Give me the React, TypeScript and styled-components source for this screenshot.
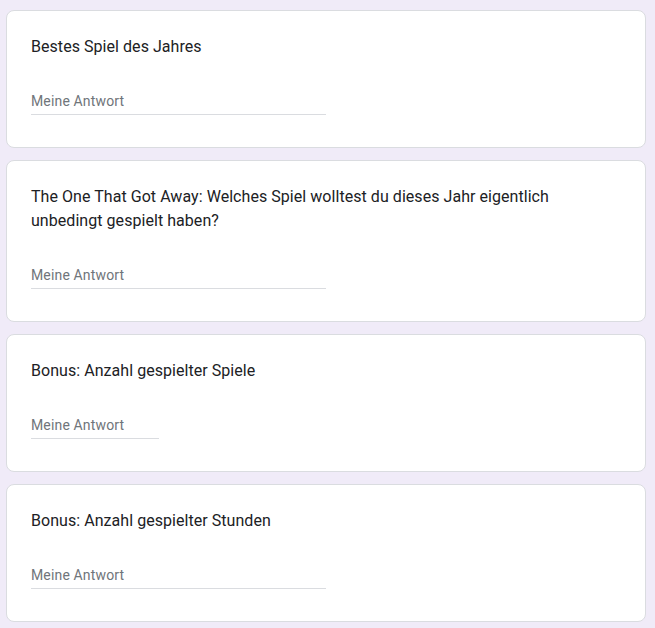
import React from 'react';
import styled, { createGlobalStyle } from 'styled-components';

const GlobalStyle = createGlobalStyle`
  html, body {
    margin: 0;
    padding: 0;
    background: #f0ebf8;
  }
`;

const Page = styled.div`
  display: flex;
  flex-direction: column;
  gap: 12px;
  padding: 10px 9px 10px 6px;
  background: #f0ebf8;
  min-height: 628px;
  box-sizing: border-box;
`;

const Card = styled.div`
  background: #fff;
  border: 1px solid #dadce0;
  border-radius: 8px;
  padding: 24px;
`;

const Title = styled.div`
  font-family: Roboto, 'Noto Sans', sans-serif;
  font-size: 16px;
  line-height: 24px;
  color: #202124;
  letter-spacing: 0.05px;
`;

const AnswerWrap = styled.div`
  padding: 31px 0 8px;
`;

const Answer = styled.input<{ $short?: boolean }>`
  display: block;
  box-sizing: content-box;
  width: ${(p) => (p.$short ? '128px' : '295px')};
  height: 22px;
  margin: 0;
  padding: 0 0 2px;
  border: none;
  border-bottom: 1px solid #dadce0;
  outline: none;
  background: transparent;
  font-family: Roboto, 'Noto Sans', sans-serif;
  font-size: 14px;
  line-height: 22px;
  letter-spacing: 0.15px;
  color: #202124;

  &::placeholder {
    color: #70757a;
  }
`;

const questions = [
  { title: 'Bestes Spiel des Jahres' },
  {
    title:
      'The One That Got Away: Welches Spiel wolltest du dieses Jahr eigentlich unbedingt gespielt haben?',
  },
  { title: 'Bonus: Anzahl gespielter Spiele', short: true },
  { title: 'Bonus: Anzahl gespielter Stunden' },
];

const App = () => {
  return (
    <>
      <GlobalStyle />
      <Page>
        {questions.map((q) => (
          <Card key={q.title}>
            <Title>{q.title}</Title>
            <AnswerWrap>
              <Answer placeholder="Meine Antwort" $short={q.short} />
            </AnswerWrap>
          </Card>
        ))}
      </Page>
    </>
  );
};

export default App;
